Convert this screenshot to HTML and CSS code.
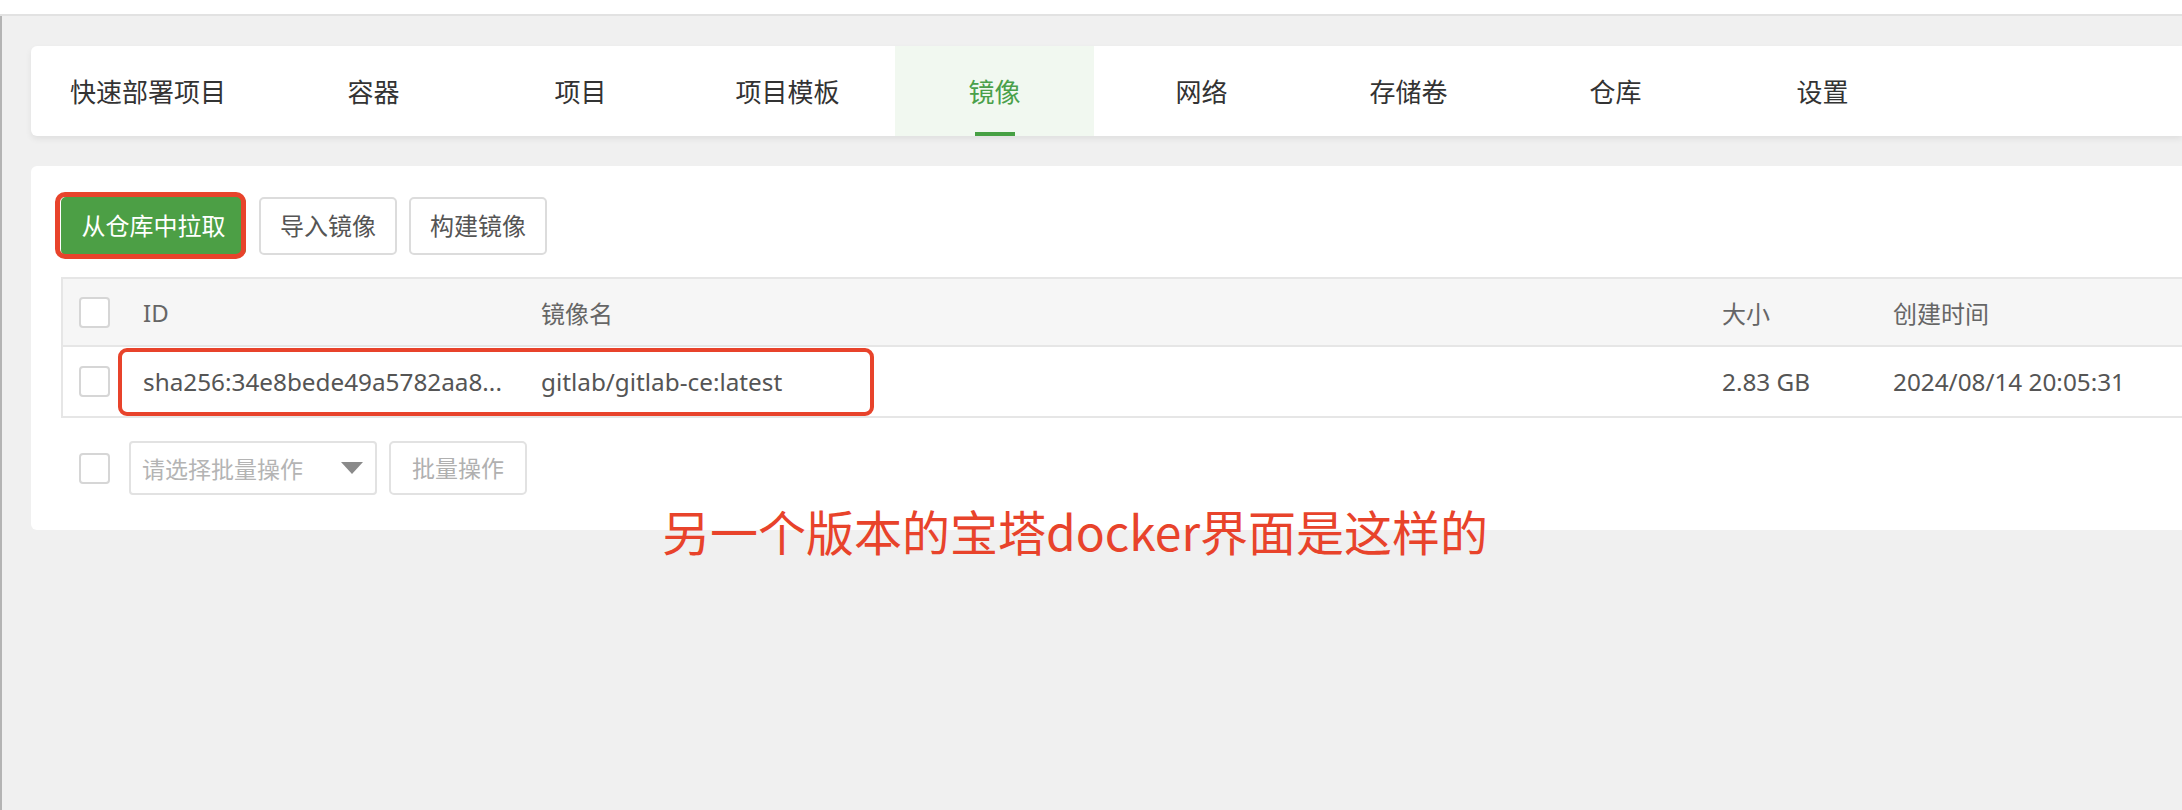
FILE: index.html
```html
<!DOCTYPE html>
<html lang="zh-CN">
<head>
<meta charset="utf-8">
<title>Docker</title>
<link rel="stylesheet" href="styles.css">
</head>
<body>
<div class="topbar"></div>
<div class="main">
  <nav class="tabs">
    <div class="tab tab-first">快速部署项目</div>
    <div class="tab">容器</div>
    <div class="tab">项目</div>
    <div class="tab">项目模板</div>
    <div class="tab active">镜像</div>
    <div class="tab">网络</div>
    <div class="tab">存储卷</div>
    <div class="tab">仓库</div>
    <div class="tab">设置</div>
  </nav>
  <section class="panel">
    <div class="toolbar">
      <button class="btn btn-green">从仓库中拉取</button>
      <button class="btn btn-import">导入镜像</button>
      <button class="btn">构建镜像</button>
    </div>
    <div class="table">
      <div class="row head">
        <div class="cell cb-cell"><span class="checkbox"></span></div>
        <div class="cell">ID</div>
        <div class="cell">镜像名</div>
        <div class="cell">大小</div>
        <div class="cell">创建时间</div>
      </div>
      <div class="row body-row">
        <div class="cell cb-cell"><span class="checkbox"></span></div>
        <div class="cell">sha256:34e8bede49a5782aa8...</div>
        <div class="cell">gitlab/gitlab-ce:latest</div>
        <div class="cell">2.83 GB</div>
        <div class="cell">2024/08/14 20:05:31</div>
      </div>
    </div>
    <div class="batch">
      <span class="checkbox"></span>
      <div class="select"><span>请选择批量操作</span><i class="caret"></i></div>
      <button class="btn btn-disabled">批量操作</button>
    </div>
  </section>
</div>
<div class="mark mark-btn"></div>
<div class="mark mark-row"></div>
<div class="note">另一个版本的宝塔docker界面是这样的</div>
</body>
</html>
```
FILE: styles.css
```css
* { box-sizing: border-box; }
html, body { margin: 0; padding: 0; }
body {
  width: 2182px;
  height: 810px;
  overflow: hidden;
  background: #f0f0f0;
  font-family: "Noto Sans", "Noto Sans CJK SC", sans-serif;
  color: #333;
  position: relative;
}
.topbar {
  height: 16px;
  background: #fff;
  border-bottom: 2px solid #e2e2e2;
}
.main {
  height: 794px;
  border-left: 2px solid #b4b4b4;
  padding: 30px 0 0 29px;
}
.tabs {
  height: 90px;
  background: #fff;
  border-radius: 6px 0 0 6px;
  box-shadow: 0 3px 6px rgba(0, 0, 0, 0.07);
  display: flex;
  gap: 8px;
}
.tab {
  width: 199px;
  flex: 0 0 199px;
  display: flex;
  align-items: center;
  justify-content: center;
  font-size: 26px;
  color: #333;
  position: relative;
  white-space: nowrap;
}
.tab-first {
  width: 235px;
  flex: 0 0 235px;
  justify-content: flex-start;
  padding-left: 39px;
}
.tab.active {
  background: #f1f8f0;
  color: #4aa04a;
}
.tab.active::after {
  content: "";
  position: absolute;
  left: 80px;
  bottom: 0;
  width: 40px;
  height: 4px;
  background: #46a043;
}
.panel {
  margin-top: 30px;
  height: 364px;
  background: #fff;
  border-radius: 6px 0 0 6px;
  padding: 31px 0 0 30px;
}
.toolbar {
  display: flex;
  height: 58px;
}
.btn {
  font-family: "Noto Sans", "Noto Sans CJK SC", sans-serif;
  font-size: 24px;
  height: 58px;
  padding: 0;
  border: 2px solid #dcdcdc;
  border-radius: 5px;
  background: #fff;
  color: #555;
  margin-right: 12px;
  line-height: 1;
  white-space: nowrap;
  text-align: center;
}
.btn-green {
  width: 185px;
  background: #4c9f45;
  border-color: #4c9f45;
  color: #fff;
  margin-right: 13px;
}
.btn-import, .toolbar .btn:last-child { width: 138px; }
.table {
  margin-top: 22px;
  border: 2px solid #e6e6e6;
  border-right: none;
}
.row {
  display: grid;
  grid-template-columns: 80px 398px 1181px 171px 1fr;
  align-items: center;
  font-size: 24px;
  white-space: nowrap;
}
.head {
  height: 68px;
  background: #f6f6f6;
  color: #666;
  border-bottom: 2px solid #e6e6e6;
}
.body-row {
  height: 69px;
  color: #555;
  font-size: 24.3px;
}
.cb-cell { padding-left: 16px; display: flex; align-items: center; }
.checkbox {
  display: inline-block;
  width: 31px;
  height: 31px;
  border: 2px solid #d6d6d6;
  border-radius: 4px;
  background: #fff;
}
.batch {
  margin-top: 23px;
  display: flex;
  align-items: center;
  padding-left: 18px;
}
.select {
  width: 248px;
  height: 54px;
  margin-left: 19px;
  margin-right: 12px;
  border: 2px solid #e2e2e2;
  border-radius: 4px;
  display: flex;
  align-items: center;
  justify-content: space-between;
  padding: 0 12px 0 11px;
  font-size: 23px;
  color: #b4b4b4;
  white-space: nowrap;
}
.caret {
  width: 0;
  height: 0;
  border-left: 11px solid transparent;
  border-right: 11px solid transparent;
  border-top: 12px solid #8a8a8a;
}
.btn-disabled {
  width: 138px;
  height: 54px;
  border-color: #e2e2e2;
  color: #b0b0b0;
  font-size: 23px;
}
.mark {
  position: absolute;
  border: 5px solid #e8432b;
  border-radius: 10px;
}
.mark-btn { left: 55px; top: 192px; width: 191px; height: 67px; }
.mark-row { left: 118px; top: 348px; width: 756px; height: 68px; border-width: 4px; border-radius: 9px; }
.note {
  position: absolute;
  left: 662px;
  top: 500px;
  font-family: "Noto Sans CJK SC", sans-serif;
  font-size: 48px;
  line-height: 60px;
  color: #e8432b;
  white-space: nowrap;
}
```
